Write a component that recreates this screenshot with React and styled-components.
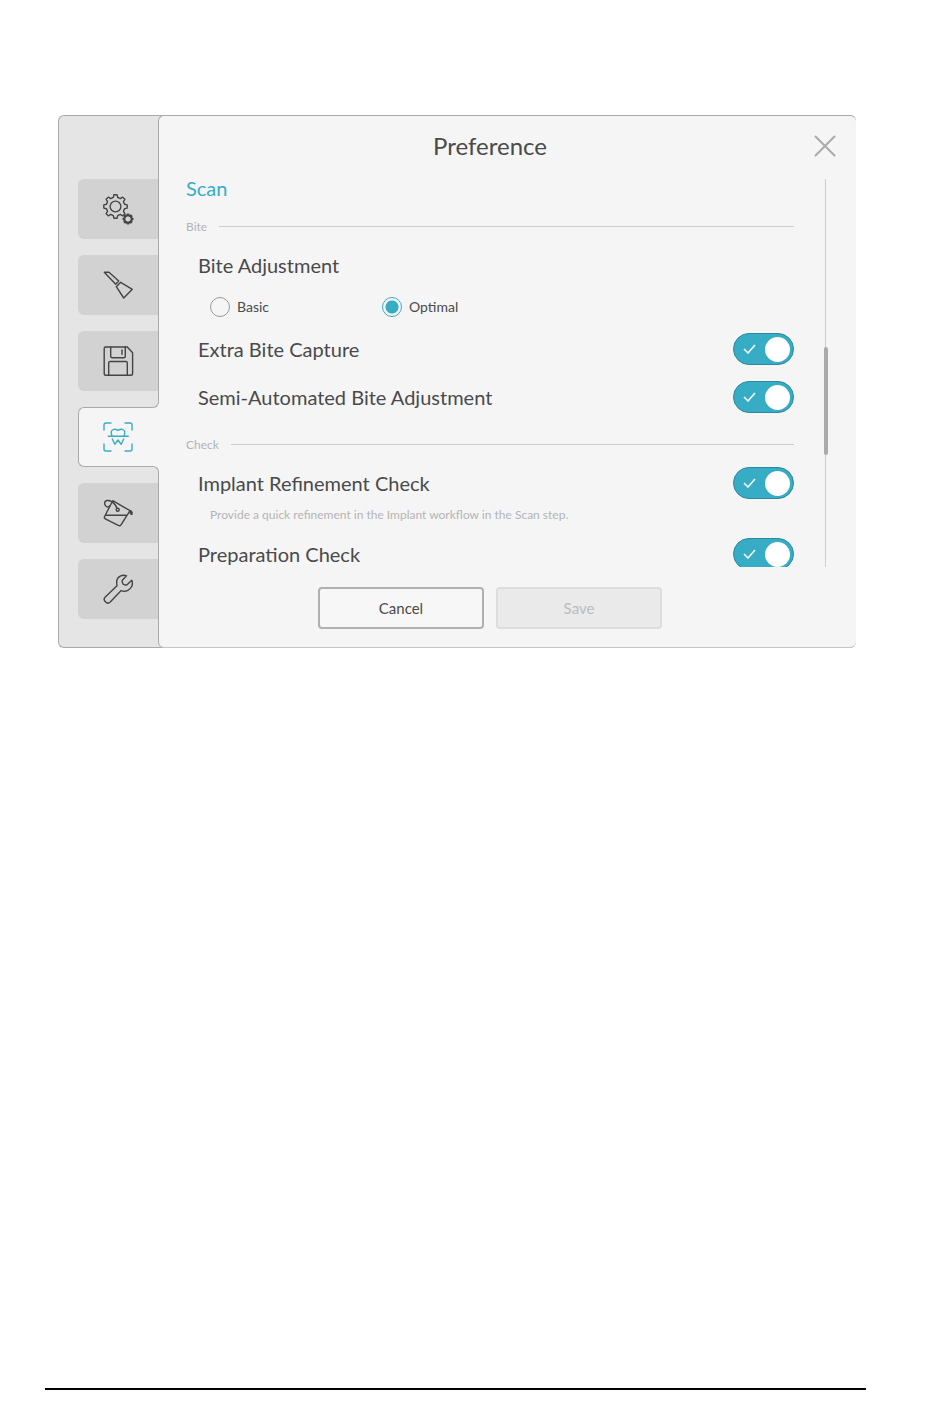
import { useState } from "react";
import styled, { createGlobalStyle, css } from "styled-components";

const GlobalStyle = createGlobalStyle`
  * {
    box-sizing: border-box;
  }

  body {
    margin: 0;
    background-color: #ffffff;
    color: #4a4a4a;
    font-family: Lato, Carlito, sans-serif;
  }
`;

const Page = styled.div`
  display: flex;
  flex-direction: column;
  justify-content: space-between;
  min-height: 100vh;
  padding: 115px 84px 29px 45px;
`;

const Dialog = styled.section`
  display: flex;
  margin: 0 10px 0 13px;
  background-color: #e5e5e5;
  border: 1px solid #aaaaaa;
  border-right: none;
  border-radius: 6px;
`;

const PageRule = styled.hr`
  width: 100%;
  margin: 0;
  border: none;
  border-top: 2px solid #000000;
`;

const Sidebar = styled.nav`
  display: flex;
  flex-direction: column;
  gap: 16px;
  width: 99px;
  padding: 63px 0 28px 19px;
`;

const activeTab = css`
  position: relative;
  z-index: 1;
  margin-right: -1px;
  padding-right: 2px;
  background-color: #f5f5f5;
  border: 1px solid #aaaaaa;
  border-right: none;
  color: #36adc4;

  &::before,
  &::after {
    content: "";
    position: absolute;
    right: 0;
    width: 7px;
    height: 7px;
    background-color: #e5e5e5;
    border-right: 1px solid #aaaaaa;
  }

  &::before {
    bottom: 100%;
    border-bottom: 1px solid #aaaaaa;
    border-bottom-right-radius: 6px;
    box-shadow: 2px 2px 0 #f5f5f5;
  }

  &::after {
    top: 100%;
    border-top: 1px solid #aaaaaa;
    border-top-right-radius: 6px;
    box-shadow: 2px -2px 0 #f5f5f5;
  }
`;

const Tab = styled.button`
  display: flex;
  align-items: center;
  justify-content: center;
  height: 60px;
  padding: 0;
  border: none;
  border-radius: 6px 0 0 6px;
  background-color: #d2d2d2;
  color: #444444;
  cursor: pointer;

  ${(props) => props.$active && activeTab}
`;

const TabIcon = styled.svg`
  width: 32px;
  height: 32px;
  fill: none;
  stroke: currentColor;
  stroke-width: 1.4;
  stroke-linecap: round;
  stroke-linejoin: round;
`;

const Panel = styled.div`
  flex: 1;
  display: grid;
  grid-template-columns: 1fr 62px;
  grid-template-rows: 60px auto auto;
  margin: -1px 0;
  padding-left: 27px;
  background-color: #f5f5f5;
  border: 1px solid #aaaaaa;
  border-right: none;
  border-bottom-color: #c4c4c4;
  border-radius: 6px;
`;

const Title = styled.h1`
  align-self: center;
  margin: 0;
  font-size: 24px;
  font-weight: 400;
  line-height: 32px;
  text-align: center;
`;

const CloseButton = styled.button`
  display: flex;
  align-self: center;
  justify-self: center;
  padding: 0;
  border: none;
  background: none;
  color: #aaaaaa;
  cursor: pointer;

  svg {
    width: 22px;
    height: 22px;
    stroke: currentColor;
    stroke-width: 2;
    stroke-linecap: round;
  }
`;

const Content = styled.div`
  height: 391px;
  overflow: hidden;
`;

const Heading = styled.h2`
  margin: 0 0 11px;
  color: #36adc4;
  font-size: 20px;
  font-weight: 400;
  line-height: 24px;
`;

const Group = styled.div`
  display: flex;
  flex-direction: column;
  gap: 16px;
  margin-bottom: 16px;
`;

const GroupTitle = styled.h3`
  display: flex;
  align-items: center;
  gap: 12px;
  height: 30px;
  margin: 0 0 -8px;
  color: #b4b4b4;
  font-size: 12px;
  font-weight: 400;

  &::after {
    content: "";
    flex: 1;
    border-top: 1px solid #cccccc;
  }
`;

const Row = styled.div`
  display: flex;
  align-items: center;
  justify-content: space-between;
  height: 32px;
  padding-left: 12px;
  font-size: 20px;
`;

const Hint = styled.p`
  margin: -8px 0 0;
  padding-left: 24px;
  color: #b4b4b4;
  font-size: 12px;
  line-height: 15px;
`;

const RadioGroup = styled.div`
  display: grid;
  grid-template-columns: 172px 172px;
  padding-left: 24px;
`;

const RadioLabel = styled.label`
  display: flex;
  align-items: center;
  gap: 7px;
  font-size: 14px;
  line-height: 20px;
`;

const Radio = styled.input`
  appearance: none;
  width: 20px;
  height: 20px;
  margin: 0;
  border: 1px solid #999999;
  border-radius: 50%;

  &:checked {
    border-color: #36adc4;
    background: radial-gradient(circle, #36adc4 6px, transparent 7px);
  }
`;

const Switch = styled.span`
  position: relative;
  display: flex;

  svg {
    position: absolute;
    left: 10px;
    top: 11px;
    width: 13px;
    height: 10px;
    fill: none;
    stroke: #ffffff;
    stroke-width: 1.5;
    pointer-events: none;
  }
`;

const SwitchInput = styled.input`
  appearance: none;
  display: flex;
  align-items: center;
  width: 61px;
  height: 32px;
  margin: 0;
  padding: 0 3px;
  border: 1px solid #999999;
  border-radius: 16px;
  background-color: #b4b4b4;
  cursor: pointer;

  &::before {
    content: "";
    width: 25px;
    height: 25px;
    border-radius: 50%;
    background-color: #ffffff;
  }

  &:checked {
    justify-content: flex-end;
    border-color: #2b8a9e;
    background-color: #36adc4;
  }
`;

const ScrollTrack = styled.div`
  position: relative;
  justify-self: center;
  width: 1px;
  margin-top: 3px;
  background-color: #cccccc;
`;

const ScrollThumb = styled.div`
  position: absolute;
  top: 168px;
  left: -1px;
  width: 4px;
  height: 108px;
  border-radius: 2px;
  background-color: #aaaaaa;
`;

const Actions = styled.div`
  display: flex;
  justify-content: center;
  gap: 12px;
  padding: 20px 0 18px;
`;

const Button = styled.button`
  width: 166px;
  height: 42px;
  border: 2px solid #b0b0b0;
  border-radius: 4px;
  background-color: #f7f7f7;
  color: #4a4a4a;
  font-family: inherit;
  font-size: 15px;

  &:disabled {
    border-color: #dddddd;
    background-color: #eaeaea;
    color: #bbbbbb;
  }
`;

const gearPath = (cx, cy, outer, inner, teeth) => {
  const step = (Math.PI * 2) / teeth;
  const points = [];
  for (let i = 0; i < teeth; i++) {
    [
      [-0.31, inner],
      [-0.17, outer],
      [0.17, outer],
      [0.31, inner],
    ].forEach(([offset, r]) => {
      const a = (i + offset) * step;
      points.push(
        `${(cx + r * Math.sin(a)).toFixed(2)} ${(cy - r * Math.cos(a)).toFixed(2)}`
      );
    });
  }
  return `M${points.join("L")}Z`;
};

const tabs = [
  {
    id: "general",
    label: "General",
    icon: (
      <>
        <path d={gearPath(13.5, 13.5, 11.8, 9.3, 8)} />
        <circle cx="13.5" cy="13.5" r="5.4" />
        <path d={gearPath(26, 26, 4.6, 3.4, 8)} strokeWidth="1.8" />
      </>
    ),
  },
  {
    id: "display",
    label: "Display",
    icon: (
      <>
        <path d="M2.3 3.3H7L16.7 12L13.7 15.3Z" />
        <path d="M18.7 13.3L30.3 20.3L21.7 29L14.3 17.7Z" />
      </>
    ),
  },
  {
    id: "save",
    label: "Save options",
    icon: (
      <>
        <path d="M3.5 2H25.3L30.6 7.7V28.5Q30.6 30.3 28.8 30.3H4Q2.2 30.3 2.2 28.5V3.5Q2.2 2 3.5 2Z" />
        <path d="M8.7 2V11.2Q8.7 12.7 10.2 12.7H21.8Q23.3 12.7 23.3 11.2V2M20 5V9.2" />
        <path d="M6.7 30.3V18Q6.7 16.5 8.2 16.5H24Q25.3 16.5 25.3 18V30.3" />
      </>
    ),
  },
  {
    id: "scan",
    label: "Scan",
    icon: (
      <>
        <path d="M2 9V4Q2 2 4 2H9M23 2H28Q30 2 30 4V9M30 23V28Q30 30 28 30H23M9 30H4Q2 30 2 28V23" />
        <path d="M6.3 15.3H26.3M9.8 15.3C10 13.5 8.8 12.5 9.3 10.6C10 8 13 7.6 16 9.4C19 7.6 22 8 22.7 10.6C23.2 12.5 22 13.5 22.2 15.3" />
        <path d="M10.3 18L12.8 23.3L16 19L19.2 23.3L21.7 18" />
      </>
    ),
  },
  {
    id: "color",
    label: "Color",
    icon: (
      <>
        <path d="M10.7 3.7L28 13.7L19 27.8Q18 29.3 16.3 28.4L3.3 21.8Q1.8 21 2.6 19.5ZM3.5 18.3H24.8" />
        <path d="M8 8.7C5.5 12 2.3 8.5 2.6 6C3 3 7 2.8 10 4.8C13 6.8 14.3 8.5 15 11.3" />
        <circle cx="15.7" cy="12.8" r="1.5" />
        <path d="M28 13.7C30 14 30.3 15.5 30 17.2C28.5 17.4 28 16 28 13.7Z" fill="currentColor" />
      </>
    ),
  },
  {
    id: "tools",
    label: "Tools",
    icon: (
      <path d="M24.5 2.8C20.5 1 15 3.8 14.7 8.5Q14.6 10.5 15 12.8L3 24.3C0.5 27 4.8 32 8 29.3L19.2 17.6C21 18.4 23.5 18.6 25.8 17.3C29.8 15 31.2 11.2 29.8 7.3L25 11.8Q22.8 12.3 21.3 11.2Q19.8 9.5 20.3 7.2Z" />
    ),
  },
];

const Toggle = ({ id, label }) => {
  const [checked, setChecked] = useState(true);

  return (
    <Row>
      <label htmlFor={id}>{label}</label>
      <Switch>
        <SwitchInput
          id={id}
          type="checkbox"
          checked={checked}
          onChange={(e) => setChecked(e.target.checked)}
        />
        {checked && (
          <svg viewBox="0 0 13 10">
            <path d="M1 5L5 9L12 1" />
          </svg>
        )}
      </Switch>
    </Row>
  );
};

const App = () => {
  const [tab, setTab] = useState("scan");
  const [bite, setBite] = useState("Optimal");

  return (
    <>
      <GlobalStyle />
      <Page>
        <Dialog>
          <Sidebar>
            {tabs.map((item) => (
              <Tab
                key={item.id}
                aria-label={item.label}
                $active={item.id === tab}
                onClick={() => setTab(item.id)}
              >
                <TabIcon viewBox="0 0 32 32">{item.icon}</TabIcon>
              </Tab>
            ))}
          </Sidebar>

          <Panel>
            <Title>Preference</Title>
            <CloseButton aria-label="Close">
              <svg viewBox="0 0 22 22">
                <path d="M1.5 1.5L20.5 20.5M20.5 1.5L1.5 20.5" />
              </svg>
            </CloseButton>

            <Content>
              <Heading>Scan</Heading>
              <Group>
                <GroupTitle>Bite</GroupTitle>
                <Row id="bite-adjustment">Bite Adjustment</Row>
                <RadioGroup role="radiogroup" aria-labelledby="bite-adjustment">
                  {["Basic", "Optimal"].map((value) => (
                    <RadioLabel key={value}>
                      <Radio
                        type="radio"
                        name="bite"
                        checked={bite === value}
                        onChange={() => setBite(value)}
                      />
                      {value}
                    </RadioLabel>
                  ))}
                </RadioGroup>
                <Toggle id="extra-bite" label="Extra Bite Capture" />
                <Toggle id="semi-auto" label="Semi-Automated Bite Adjustment" />
              </Group>
              <Group>
                <GroupTitle>Check</GroupTitle>
                <Toggle id="implant" label="Implant Refinement Check" />
                <Hint>
                  Provide a quick refinement in the Implant workflow in the Scan
                  step.
                </Hint>
                <Toggle id="preparation" label="Preparation Check" />
              </Group>
            </Content>
            <ScrollTrack>
              <ScrollThumb />
            </ScrollTrack>

            <Actions>
              <Button>Cancel</Button>
              <Button disabled>Save</Button>
            </Actions>
          </Panel>
        </Dialog>
        <PageRule />
      </Page>
    </>
  );
};

export default App;
